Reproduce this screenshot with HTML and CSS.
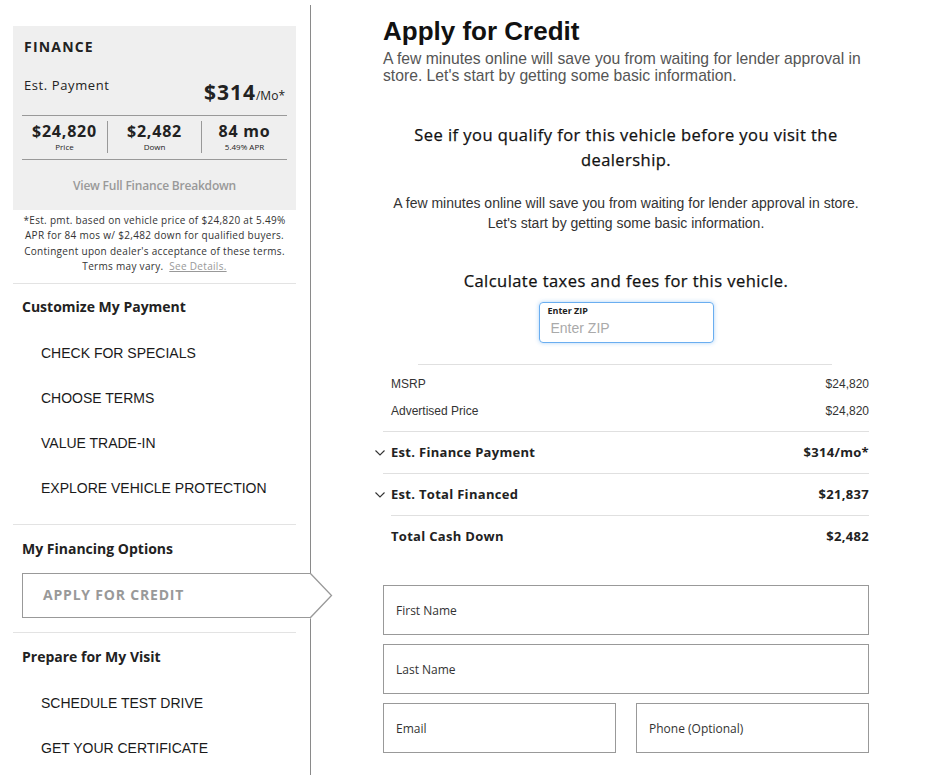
FILE: index.html
```html
<!DOCTYPE html>
<html>
<head>
    <title>Apply for Credit</title>
    <link rel="stylesheet" href="styles.css">
</head>
<body>
    <div class="page">
        <aside class="sidebar">
            <div class="finance-box">
                <h3 class="finance-title">FINANCE</h3>
                <div class="finance-pay">
                    <span class="pay-label">Est. Payment</span>
                    <span class="pay-amount">$314<small>/Mo*</small></span>
                </div>
                <div class="finance-stats">
                    <div class="stat">
                        <div class="stat-value">$24,820</div>
                        <div class="stat-label">Price</div>
                    </div>
                    <div class="stat">
                        <div class="stat-value">$2,482</div>
                        <div class="stat-label">Down</div>
                    </div>
                    <div class="stat">
                        <div class="stat-value">84 mo</div>
                        <div class="stat-label">5.49% APR</div>
                    </div>
                </div>
                <div class="finance-link">View Full Finance Breakdown</div>
            </div>
            <p class="disclaimer">
                *Est. pmt. based on vehicle price of $24,820 at 5.49%<br>
                APR for 84 mos w/ $2,482 down for qualified buyers.<br>
                Contingent upon dealer's acceptance of these terms.<br>
                Terms may vary. <a href="#">See Details.</a>
            </p>

            <div class="nav-group first">
                <h4 class="nav-title">Customize My Payment</h4>
                <ul class="nav-list">
                    <li>CHECK FOR SPECIALS</li>
                    <li>CHOOSE TERMS</li>
                    <li>VALUE TRADE-IN</li>
                    <li>EXPLORE VEHICLE PROTECTION</li>
                </ul>
            </div>
            <div class="nav-group">
                <h4 class="nav-title">My Financing Options</h4>
                <div class="nav-active">
                    APPLY FOR CREDIT
                    <svg class="tab-arrow" width="24" height="46" viewBox="0 0 24 46">
                        <polygon points="0,0 1,0.5 22,22.5 1,45.5 0,45.5" fill="#fff"/>
                        <polyline points="0,0.5 0.5,0.5 21.5,22.5 0.5,44.5 0,44.5" fill="none" stroke="#999" stroke-width="1.3"/>
                    </svg>
                </div>
            </div>
            <div class="nav-group last">
                <h4 class="nav-title">Prepare for My Visit</h4>
                <ul class="nav-list">
                    <li>SCHEDULE TEST DRIVE</li>
                    <li>GET YOUR CERTIFICATE</li>
                </ul>
            </div>
        </aside>

        <main class="content">
            <h1>Apply for Credit</h1>
            <p class="intro">A few minutes online will save you from waiting for lender approval in store. Let's start by getting some basic information.</p>

            <h2 class="qualify">See if you qualify for this vehicle before you visit the dealership.</h2>
            <p class="qualify-text">A few minutes online will save you from waiting for lender approval in store.<br>Let's start by getting some basic information.</p>

            <h2 class="taxes">Calculate taxes and fees for this vehicle.</h2>
            <div class="zip-field">
                <label>Enter ZIP</label>
                <input type="text" placeholder="Enter ZIP">
            </div>

            <div class="price-list">
                <div class="price-row"><span>MSRP</span><span>$24,820</span></div>
                <div class="price-row"><span>Advertised Price</span><span>$24,820</span></div>
            </div>

            <div class="summary">
                <div class="summary-row">
                    <span><svg class="chev" width="10" height="6" viewBox="0 0 10 6"><polyline points="0.5,0.5 5,5 9.5,0.5" fill="none" stroke="#333" stroke-width="1.1"/></svg>Est. Finance Payment</span>
                    <span>$314/mo*</span>
                </div>
                <div class="summary-row">
                    <span><svg class="chev" width="10" height="6" viewBox="0 0 10 6"><polyline points="0.5,0.5 5,5 9.5,0.5" fill="none" stroke="#333" stroke-width="1.1"/></svg>Est. Total Financed</span>
                    <span>$21,837</span>
                </div>
                <div class="summary-row">
                    <span>Total Cash Down</span>
                    <span>$2,482</span>
                </div>
            </div>

            <form class="credit-form">
                <div class="field">First Name</div>
                <div class="field">Last Name</div>
                <div class="field-pair">
                    <div class="field">Email</div>
                    <div class="field">Phone (Optional)</div>
                </div>
            </form>
        </main>
    </div>
</body>
</html>
```

FILE: styles.css
```css
* {
    box-sizing: border-box;
}
body {
    margin: 0;
    font-family: 'Open Sans', 'Liberation Sans', sans-serif;
    color: #222;
    background: #fff;
}
.page {
    display: flex;
    align-items: flex-start;
}

/* sidebar */
.sidebar {
    width: 311px;
    flex-shrink: 0;
    margin-top: 5px;
    padding: 21px 14px 0 13px;
    border-right: 1px solid #8a8a8a;
    min-height: 770px;
}
.finance-box {
    background: #efefef;
    padding: 11px 9px 0;
}
.finance-title {
    margin: 0;
    padding: 0 2px;
    font-size: 14px;
    line-height: 20px;
    font-weight: 700;
    letter-spacing: 1.2px;
}
.finance-pay {
    display: flex;
    justify-content: space-between;
    align-items: flex-start;
    padding: 18px 2px 4px;
    border-bottom: 1px solid #999;
}
.pay-label {
    font-size: 13px;
    line-height: 20px;
    letter-spacing: 0.6px;
}
.pay-amount {
    margin-top: 2px;
    font-size: 21px;
    line-height: 30px;
    font-weight: 700;
    letter-spacing: 1px;
}
.pay-amount small {
    font-size: 12px;
    font-weight: 400;
    letter-spacing: 0;
}
.finance-stats {
    display: flex;
    padding: 5px 0 6px;
    border-bottom: 1px solid #999;
}
.stat {
    flex: 0 0 85px;
    text-align: center;
    border-left: 1px solid #999;
}
.stat:first-child {
    border-left: none;
}
.stat:nth-child(2) {
    flex-basis: 94px;
}
.stat:last-child {
    flex: 1;
}
.stat-value {
    font-size: 16px;
    line-height: 20px;
    font-weight: 700;
    letter-spacing: 0.8px;
}
.stat-label {
    font-size: 8px;
    line-height: 12px;
}
.finance-link {
    padding: 16px 0 14px;
    text-align: center;
    font-size: 12px;
    line-height: 20px;
    font-weight: 600;
    letter-spacing: -0.2px;
    color: #999;
}
.disclaimer {
    margin: 0;
    padding: 3px 0 9px;
    text-align: center;
    font-size: 10px;
    line-height: 15.3px;
    letter-spacing: 0.3px;
    color: #333;
    border-bottom: 1px solid #e3e3e3;
}
.disclaimer a {
    color: #999;
    margin-left: 3px;
}
.nav-group {
    padding: 14px 0;
    border-bottom: 1px solid #e3e3e3;
}
.nav-group.first {
    padding: 13px 0;
}
.nav-group.last {
    border-bottom: none;
}
.nav-title {
    margin: 0;
    padding: 0 9px;
    font-size: 14px;
    line-height: 20px;
    font-weight: 700;
}
.nav-list {
    list-style: none;
    margin: 14px 0 0;
    padding: 0 0 0 28px;
}
.nav-list li {
    height: 45px;
    line-height: 45px;
    font-family: 'Liberation Sans', Arial, sans-serif;
    font-size: 14px;
    color: #1a1a1a;
}
.nav-active {
    position: relative;
    z-index: 1;
    margin: 14px -15px 0 9px;
    height: 45px;
    line-height: 42px;
    padding-left: 20px;
    border: 1px solid #999;
    border-right: none;
    background: #fff;
    font-size: 14px;
    font-weight: 700;
    letter-spacing: 0.8px;
    color: #999;
}
.tab-arrow {
    position: absolute;
    left: calc(100% - 1px);
    top: -1px;
}

/* main content */
.content {
    width: 486px;
    margin-left: 72px;
    padding-top: 16px;
}
h1 {
    margin: 0;
    font-family: 'Liberation Sans', Arial, sans-serif;
    font-size: 26px;
    line-height: 30px;
    font-weight: 700;
    color: #111;
}
.intro {
    margin: 4px 0 0;
    font-family: 'Liberation Sans', Arial, sans-serif;
    font-size: 15.7px;
    line-height: 17px;
    color: #555;
}
.qualify,
.taxes {
    text-align: center;
    font-size: 16.5px;
    font-weight: 400;
    letter-spacing: 0.45px;
    color: #111;
    -webkit-text-stroke: 0.25px #111;
}
.qualify {
    margin: 38px 10px 0;
    line-height: 25px;
}
.qualify-text {
    margin: 21px 0 0;
    text-align: center;
    font-family: 'Liberation Sans', Arial, sans-serif;
    font-size: 14px;
    line-height: 20px;
    color: #333;
}
.taxes {
    margin: 36px 0 0;
    line-height: 24px;
}
.zip-field {
    width: 175px;
    height: 41px;
    margin: 9px auto 0;
    padding: 2px 8px 0;
    border: 1px solid #6aaef0;
    border-radius: 4px;
    box-shadow: 0 0 4px rgba(80, 160, 240, 0.45);
}
.zip-field label {
    display: block;
    font-size: 9px;
    line-height: 11px;
    font-weight: 700;
}
.zip-field input {
    width: 100%;
    border: none;
    outline: none;
    padding: 0 3px;
    font-family: 'Liberation Sans', Arial, sans-serif;
    font-size: 14px;
    line-height: 20px;
}
.zip-field input::placeholder {
    color: #aaa;
}
.price-list {
    margin: 21px 37px 0 35px;
    padding: 6px 0;
    border-top: 1px solid #e0e0e0;
}
.price-row {
    display: flex;
    justify-content: space-between;
    margin: 0 -37px 0 -27px;
    height: 27px;
    line-height: 27px;
    font-family: 'Liberation Sans', Arial, sans-serif;
    font-size: 12px;
    color: #333;
}
.summary {
    border-top: 1px solid #e0e0e0;
}
.summary-row {
    display: flex;
    justify-content: space-between;
    height: 42px;
    line-height: 41px;
    padding-left: 8px;
    border-bottom: 1px solid #e0e0e0;
    font-size: 13px;
    font-weight: 700;
    letter-spacing: 0.3px;
}
.summary-row:last-child {
    border-bottom: none;
}
.summary-row:nth-child(2) {
    border-bottom: none;
    background: linear-gradient(#e0e0e0, #e0e0e0) 8px 100% / calc(100% - 8px) 1px no-repeat;
}
.chev {
    margin: 0 6px 2px -16px;
    vertical-align: middle;
}
.credit-form {
    margin-top: 27px;
}
.field {
    height: 50px;
    line-height: 48px;
    padding: 1px 0 0 12px;
    margin-bottom: 9px;
    border: 1px solid #999;
    font-size: 12px;
    color: #333;
}
.field-pair {
    display: flex;
    gap: 20px;
}
.field-pair .field {
    flex: 1;
}
```
